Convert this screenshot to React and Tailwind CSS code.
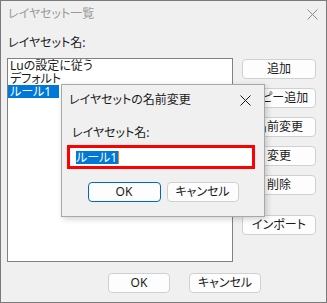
import React from 'react';

const font = "font-['Noto_Sans','Noto_Sans_CJK_JP',sans-serif] [font-feature-settings:'palt']";

function CloseIcon({ color }) {
  return (
    <svg width="11" height="11" viewBox="0 0 11 11">
      <path d="M0.5 0.5 L10.5 10.5 M10.5 0.5 L0.5 10.5" stroke={color} strokeWidth="1" fill="none" />
    </svg>
  );
}

function Btn({ children, className = '' }) {
  return (
    <div className={`h-[20px] flex items-center justify-center rounded-[4px] border border-[#d0d0d0] bg-[#fdfdfd] text-[12px] text-[#1a1a1a] ${className}`}>
      {children}
    </div>
  );
}

export default function App() {
  const items = ['Luの設定に従う', 'デフォルト'];

  return (
    <div className={`relative w-[327px] h-[303px] border border-[#7a7a7a] bg-[#f0f0f0] flex flex-col ${font}`}>
      {/* title bar */}
      <div className="h-[26px] flex items-center justify-between pl-[7px] pr-[8px]">
        <span className="text-[12px] text-[#9a9a9a]">レイヤセット一覧</span>
        <CloseIcon color="#8a8a8a" />
      </div>

      <div className="mt-[8px] h-[16px] leading-[16px] pl-[7px] text-[12px] text-[#1a1a1a]">レイヤセット名:</div>

      <div className="mt-[7px] flex pl-[6px]">
        <div className="w-[226px] h-[204px] border border-[#828282] bg-white text-[12px] text-[#1a1a1a]">
          {items.map((t) => (
            <div key={t} className="h-[13px] leading-[13px] pl-[2px]">{t}</div>
          ))}
          <div className="h-[13px] leading-[13px]">
            <span className="inline-block h-[13px] bg-[#0078d7] text-white pl-[2px] pr-[8px]">ルール1</span>
          </div>
        </div>

        <div className="ml-[9px] w-[74px] mt-[1px] flex flex-col gap-[9px]">
          <Btn>追加</Btn>
          <Btn>コピー追加</Btn>
          <Btn>名前変更</Btn>
          <Btn>変更</Btn>
          <Btn>削除</Btn>
          <Btn className="mt-[11px]">インポート</Btn>
        </div>
      </div>

      <div className="mt-[11px] flex gap-[19px] pl-[107px]">
        <Btn className="w-[62px]">OK</Btn>
        <Btn className="w-[72px]">キャンセル</Btn>
      </div>

      {/* rename dialog */}
      <div className="absolute left-[60px] top-[83px] w-[204px] h-[133px] border border-[#a8a8a8] bg-[#f0f0f0] shadow-[2px_2px_6px_rgba(0,0,0,0.18)] flex flex-col">
        <div className="h-[30px] flex items-center justify-between pl-[7px] pr-[13px]">
          <span className="text-[12px] text-[#1a1a1a]">レイヤセットの名前変更</span>
          <CloseIcon color="#1a1a1a" />
        </div>
        <div className="mt-[10px] h-[16px] leading-[16px] pl-[10px] text-[12px] text-[#1a1a1a]">レイヤセット名:</div>
        <div className="mt-[4px] ml-[5px] w-[188px] h-[24px] border-[3px] border-[#ff0000] bg-white flex items-center pl-[6px]">
          <span className="h-[13px] leading-[13px] bg-[#0078d7] text-white text-[12px] pr-[1px]">ルール1</span>
          <span className="w-[1px] h-[13px] bg-[#f08020]" />
        </div>
        <div className="mt-[13px] flex justify-center gap-[6px]">
          <Btn className="w-[73px] !border-[#0067c0]">OK</Btn>
          <Btn className="w-[72px]">キャンセル</Btn>
        </div>
      </div>
    </div>
  );
}
